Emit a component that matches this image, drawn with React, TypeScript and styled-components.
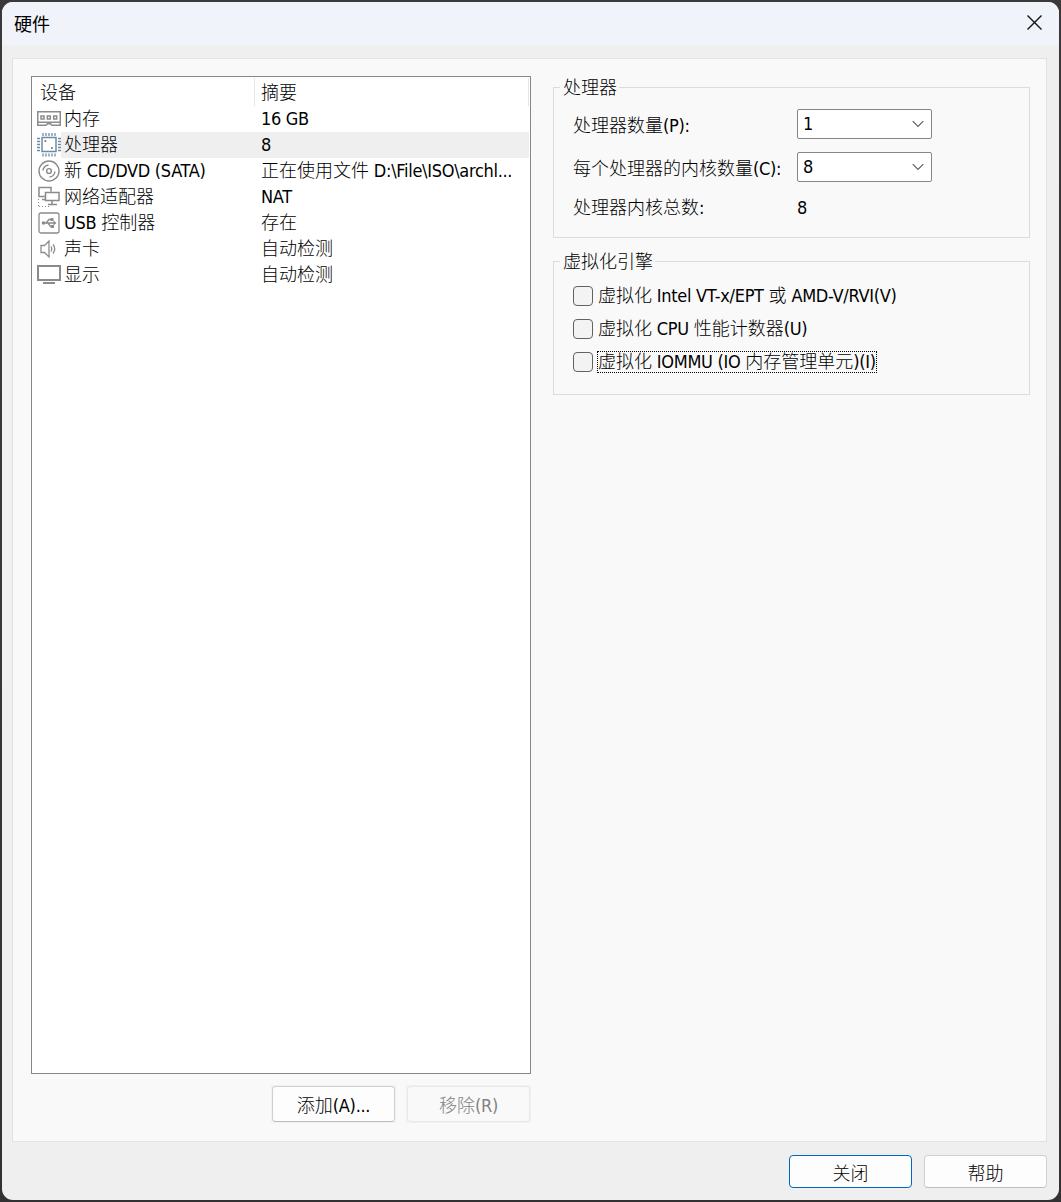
import React from "react";
import styled, { createGlobalStyle, css } from "styled-components";

const GlobalStyle = createGlobalStyle`
  *, *::before, *::after { box-sizing: border-box; }
  body { margin: 0; background: #3a3838; }
  #root { font-family: "DejaVu Sans Condensed", "DejaVu Sans", "Noto Sans CJK SC", sans-serif; }
`;

const latin = `"DejaVu Sans Condensed", "DejaVu Sans"`;

const Screen = styled.div`
  width: 1061px;
  height: 1202px;
  padding: 2px;
  background: linear-gradient(#3a3838, #333131);
`;

const Dialog = styled.main`
  width: 1057px;
  height: 1198px;
  display: flex;
  flex-direction: column;
  overflow: hidden;
  border-radius: 11px;
  background: #efefef;
  color: #000;
  font-size: 18px;
  font-stretch: condensed;
  font-weight: 300;
`;

const TitleBar = styled.header`
  height: 43px;
  flex: none;
  display: flex;
  align-items: center;
  justify-content: space-between;
  padding: 0 17px 2px 12px;
  background: #f0f3fa;
  font-weight: 400;
`;

const CloseButton = styled.button`
  display: flex;
  padding: 0;
  border: 0;
  background: none;
`;

const Panel = styled.section`
  width: 1035px;
  height: 1084px;
  flex: none;
  display: flex;
  gap: 22px;
  margin: 13px 0 0 10px;
  padding: 17px 16px 0 18px;
  border: 1px solid #e3e3e3;
  background: #f9f9f9;
`;

const Left = styled.div`
  width: 500px;
  display: flex;
  flex-direction: column;
`;

const DeviceList = styled.div`
  height: 998px;
  padding: 1px 1px 0 0;
  border: 1px solid #828790;
  background: #fff;
`;

const ListHeader = styled.div`
  height: 28px;
  display: grid;
  grid-template-columns: 223px 1fr;
  line-height: 30px;
`;

const HeadCell = styled.div<{ $indent: number }>`
  height: 28px;
  padding-left: ${(p) => p.$indent}px;
  border-right: 1px solid #e5e5e5;
`;

const Row = styled.div<{ $selected?: boolean }>`
  height: 26px;
  display: grid;
  grid-template-columns: 24px 200px 1fr;
  padding-left: 5px;
  line-height: 26px;
  white-space: nowrap;
  background: ${(p) =>
    p.$selected ? "linear-gradient(90deg, #fff 29px, #efefef 29px)" : "none"};
`;

const Name = styled.span`
  padding-left: 3px;
`;

const ListActions = styled.div`
  display: flex;
  justify-content: flex-end;
  gap: 10px;
  margin-top: 11px;
`;

const ButtonFrame = styled.span`
  padding: 1px;
  background: #f1f1f1;
`;

const Button = styled.button<{ $primary?: boolean; $tall?: boolean }>`
  width: 123px;
  height: ${(p) => (p.$tall ? 36 : 33)}px;
  display: flex;
  align-items: center;
  justify-content: center;
  padding: 0;
  border: 1px solid #d0d0d0;
  border-bottom-color: #bdbdbd;
  border-radius: 4px;
  background: #fdfdfd;
  color: #000;
  font: inherit;
  ${(p) => p.$primary && css`border-color: #0067c0;`}
  &:disabled {
    border-color: #e8e8e8;
    background: #f9f9f9;
    color: #838383;
  }
`;

const Right = styled.div`
  width: 477px;
  display: flex;
  flex-direction: column;
  gap: 23px;
  padding-top: 11px;
`;

const Group = styled.section<{ $height: number }>`
  height: ${(p) => p.$height}px;
  border: 1px solid #dcdcdc;
`;

const Legend = styled.h2`
  width: max-content;
  height: 24px;
  margin: -12px 0 0 6px;
  padding: 0 2px 0 3px;
  background: #f9f9f9;
  font: inherit;
  line-height: 24px;
`;

const Field = styled.div<{ $top: number }>`
  height: 30px;
  display: grid;
  grid-template-columns: 224px 135px;
  margin-top: ${(p) => p.$top}px;
  padding-left: 19px;
  line-height: 33px;
`;

const Select = styled.div`
  height: 30px;
  display: flex;
  align-items: center;
  justify-content: space-between;
  padding: 0 7px 0 5px;
  border: 1px solid #868686;
  border-radius: 2px;
  background: #fff;
  line-height: 28px;
`;

const Checks = styled.div`
  display: flex;
  flex-direction: column;
  align-items: flex-start;
  gap: 9px;
  margin-top: 10px;
  padding-left: 19px;
`;

const CheckRow = styled.label`
  height: 24px;
  display: flex;
  align-items: center;
  gap: 4px;
`;

const Box = styled.input`
  appearance: none;
  width: 20px;
  height: 20px;
  margin: 0;
  border: 1px solid #626262;
  border-radius: 4px;
  background: #f3f3f3;
`;

const CheckText = styled.span<{ $focused?: boolean }>`
  height: 22px;
  display: block;
  line-height: 20px;
  white-space: nowrap;
  border: 1px ${(p) => (p.$focused ? "dotted #000" : "solid transparent")};
`;

const Footer = styled.footer`
  display: flex;
  justify-content: flex-end;
  gap: 12px;
  padding: 13px 12px 0 0;
`;

const Latin = styled.span<{ $track?: number }>`
  font-family: ${latin}, sans-serif;
  font-weight: 400;
  letter-spacing: ${(p) => p.$track ?? -0.3}px;
`;

/* Splits mixed text so that Latin runs get their own face and tracking. */
function T({ children, track }: { children: string; track?: number }) {
  const runs = children.match(/[\x20-\x7e]+|[^\x20-\x7e]+/g) ?? [];
  return (
    <>
      {runs.map((run, i) =>
        /^[\x20-\x7e]/.test(run) ? (
          <Latin key={i} $track={track}>{run}</Latin>
        ) : (
          <React.Fragment key={i}>{run}</React.Fragment>
        )
      )}
    </>
  );
}

const Icon = styled.svg.attrs({ width: 24, height: 26, viewBox: "0 0 24 26", fill: "none" })`
  display: block;
  stroke: #8b8b8b;
`;

const MemoryIcon = () => (
  <Icon strokeWidth="1.5">
    <path d="M.75 5.75h22.5v13.5H15l-1.5-1.5h-3L9 19.25H.75zM1 16.2h22" />
    <path d="M4 10h3v3H4zM10.3 10h3v3h-3zM16.7 10h3v3h-3z" />
  </Icon>
);

const CpuIcon = () => (
  <Icon style={{ stroke: "#6f8ba3" }}>
    <path strokeWidth="1.5" d="M5 5.5h14v14H5z" />
    <path
      strokeWidth="1.3"
      d="M6 1v3M9 1v3M12 1v3M15 1v3M18 1v3M6 21.5v3M9 21.5v3M12 21.5v3M15 21.5v3M18 21.5v3M0 6.5h3M0 9.5h3M0 12.5h3M0 15.5h3M0 18.5h3M21 6.5h3M21 9.5h3M21 12.5h3M21 15.5h3M21 18.5h3"
    />
    <path strokeWidth="1.8" d="M7.5 9h1.8M14 16h1.8" />
  </Icon>
);

const DiscIcon = () => (
  <Icon strokeWidth="1.4">
    <circle cx="12" cy="13" r="10" />
    <circle cx="12" cy="13" r="2.4" />
    <path d="M6 12.5c.4-3 2.4-5 5.5-5.5M12.5 19c3-.3 5-2.300 5.500-5.500" />
  </Icon>
);

const NetworkIcon = () => (
  <Icon strokeWidth="1.5">
    <path d="M8.500 12.500H2V3.500h12v4M8.500 8.500H22v8H8.500zM15 17v3M11 20.500h9M5 15.500h3" />
    <path strokeWidth="1" strokeDasharray="1 2" d="M1.500 15v8M2 22.500h12" />
  </Icon>
);

const UsbIcon = () => (
  <Icon strokeWidth="1.3">
    <rect x="2" y="3" width="20" height="20" rx="2" />
    <path d="M6.500 13H18M9 13l3-3.500h2M11 13l2.500 3.500H15" />
    <path fill="#8b8b8b" stroke="none" d="M16.500 10.500l3 2.500-3 2.500zM13.500 8h3v3h-3zM14 15h3v3h-3z" />
    <circle cx="6.500" cy="13" r="1.800" fill="#8b8b8b" stroke="none" />
  </Icon>
);

const SoundIcon = () => (
  <Icon strokeWidth="1.3">
    <path d="M4 9.500h3.500L12 5v16l-4.500-4.500H4zM14 10.500q1.500 2.500 0 5M16 8.500q3.500 4.500 0 9" />
  </Icon>
);

const DisplayIcon = () => (
  <Icon>
    <path strokeWidth="2" d="M1 4h22v14H1z" />
    <path strokeWidth="2" d="M6 21h12" />
  </Icon>
);

const Chevron = () => (
  <svg width="12" height="8" viewBox="0 0 12 8" fill="none" stroke="#5c5c5c" strokeWidth="1.100">
    <path d="M.7 1.200 6 6.500l5.300-5.300" />
  </svg>
);

const devices = [
  { icon: <MemoryIcon />, name: "内存", summary: "16 GB" },
  { icon: <CpuIcon />, name: "处理器", summary: "8", selected: true },
  { icon: <DiscIcon />, name: "新 CD/DVD (SATA)", summary: "正在使用文件 D:\\File\\ISO\\archl..." },
  { icon: <NetworkIcon />, name: "网络适配器", summary: "NAT" },
  { icon: <UsbIcon />, name: "USB 控制器", summary: "存在" },
  { icon: <SoundIcon />, name: "声卡", summary: "自动检测" },
  { icon: <DisplayIcon />, name: "显示", summary: "自动检测" },
];

const options = [
  { label: "虚拟化 Intel VT-x/EPT 或 AMD-V/RVI(V)" },
  { label: "虚拟化 CPU 性能计数器(U)" },
  { label: "虚拟化 IOMMU (IO 内存管理单元)(I)", focused: true },
];

export default function App() {
  return (
    <Screen>
      <GlobalStyle />
      <Dialog lang="zh-CN">
        <TitleBar>
          <span>硬件</span>
          <CloseButton aria-label="关闭">
            <svg width="15" height="15" viewBox="0 0 15 15" stroke="#111" strokeWidth="1.400">
              <path d="M.5.5l14 14M14.500.5l-14 14" />
            </svg>
          </CloseButton>
        </TitleBar>
        <Panel>
          <Left>
            <DeviceList>
              <ListHeader>
                <HeadCell $indent={8}>设备</HeadCell>
                <HeadCell $indent={6}>摘要</HeadCell>
              </ListHeader>
              {devices.map((d) => (
                <Row key={d.name} $selected={d.selected}>
                  {d.icon}
                  <Name><T>{d.name}</T></Name>
                  <span><T>{d.summary}</T></span>
                </Row>
              ))}
            </DeviceList>
            <ListActions>
              <ButtonFrame><Button $tall><span><T>添加(A)...</T></span></Button></ButtonFrame>
              <ButtonFrame><Button $tall disabled><span><T>移除(R)</T></span></Button></ButtonFrame>
            </ListActions>
          </Left>
          <Right>
            <Group $height={151}>
              <Legend>处理器</Legend>
              <Field $top={9}>
                <span><T>处理器数量(P):</T></span>
                <Select><T>1</T><Chevron /></Select>
              </Field>
              <Field $top={13}>
                <span><T>每个处理器的内核数量(C):</T></span>
                <Select><T>8</T><Chevron /></Select>
              </Field>
              <Field $top={9}>
                <span><T>处理器内核总数:</T></span>
                <span><T>8</T></span>
              </Field>
            </Group>
            <Group $height={134}>
              <Legend>虚拟化引擎</Legend>
              <Checks>
                {options.map((o) => (
                  <CheckRow key={o.label}>
                    <Box type="checkbox" />
                    <CheckText $focused={o.focused}><T>{o.label}</T></CheckText>
                  </CheckRow>
                ))}
              </Checks>
            </Group>
          </Right>
        </Panel>
        <Footer>
          <Button $primary>关闭</Button>
          <Button>帮助</Button>
        </Footer>
      </Dialog>
    </Screen>
  );
}
